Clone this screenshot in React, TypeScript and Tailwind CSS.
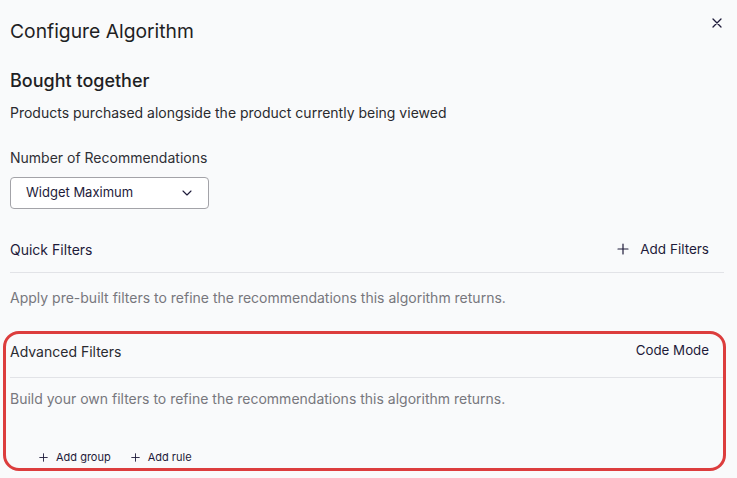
import React from "react";

const Plus = ({ size = 12 }: { size?: number }) => (
  <svg width={size} height={size} viewBox="0 0 12 12" fill="none" stroke="currentColor" strokeWidth="1.2" strokeLinecap="round">
    <path d="M6 1v10M1 6h10" />
  </svg>
);

export default function App() {
  return (
    <div
      className="relative w-[737px] h-[478px] overflow-hidden bg-[#f9fafb] text-[#222]"
      style={{ fontFamily: "Inter, 'Noto Sans', sans-serif" }}
    >
      <div className="flex flex-col pl-[10px] pr-[13px] pt-[17px]">
        <div className="flex items-start justify-between">
          <h1 className="text-[19.3px] leading-[28px] text-[#1f1f24] font-normal">Configure Algorithm</h1>
          <button className="mt-[1px] mr-[2px] text-[#1e1b3a]">
            <svg width="10" height="10" viewBox="0 0 10 10" stroke="currentColor" strokeWidth="1.3" strokeLinecap="round">
              <path d="M1 1l8 8M9 1l-8 8" />
            </svg>
          </button>
        </div>
        <h2 className="mt-[23px] text-[18px] leading-[26px] font-medium text-[#1f1f24]">Bought together</h2>
        <p className="mt-[9px] text-[14px] leading-[20px] text-[#2a2a2e]">
          Products purchased alongside the product currently being viewed
        </p>
        <label className="mt-[25px] text-[14px] leading-[20px] text-[#2f2f35]">Number of Recommendations</label>
        <button className="mt-[9px] flex h-[32px] w-[199px] items-center justify-between rounded-[4px] border border-[#a3a3a8] bg-white pl-[15px] pr-[16px] text-[13px] text-[#1e1b3a]">
          <span>Widget Maximum</span>
          <svg width="10" height="6" viewBox="0 0 10 6" fill="none" stroke="currentColor" strokeWidth="1.1" strokeLinecap="round" strokeLinejoin="round">
            <path d="M1 1l4 4 4-4" />
          </svg>
        </button>

        <div className="mt-[20px] flex h-[40px] items-center justify-between">
          <span className="text-[14px] text-[#1e1b3a]">Quick Filters</span>
          <button className="flex items-center gap-[11px] pr-[15px] text-[13.5px] text-[#1e1b3a]">
            <Plus />
            <span>Add Filters</span>
          </button>
        </div>
        <div className="mt-[3px] h-px bg-[#e2e3e7]" />
        <p className="mt-[15px] text-[14px] leading-[20px] text-[#77777d]">
          Apply pre-built filters to refine the recommendations this algorithm returns.
        </p>

        <div className="mt-[23px] flex h-[40px] items-center justify-between">
          <span className="text-[14px] text-[#2a2a30]">Advanced Filters</span>
          <button className="pr-[15px] text-[13.3px] text-[#1e1b3a]">Code Mode</button>
        </div>
        <div className="mt-[6px] h-px bg-[#e2e3e7]" />
        <p className="mt-[11px] text-[14px] leading-[20px] text-[#77777d]">
          Build your own filters to refine the recommendations this algorithm returns.
        </p>
        <div className="mt-[40px] flex h-[16px] items-center gap-[20px] pl-[29px] text-[11px] text-[#1e1b3a]">
          <button className="flex items-center gap-[8px]">
            <Plus size={9} />
            <span>Add group</span>
          </button>
          <button className="flex items-center gap-[8px]">
            <Plus size={9} />
            <span>Add rule</span>
          </button>
        </div>
      </div>

      <div className="pointer-events-none absolute left-[3px] top-[331px] h-[140px] w-[723px] rounded-[16px] border-[3px] border-[#dc3d3d]" />
    </div>
  );
}
